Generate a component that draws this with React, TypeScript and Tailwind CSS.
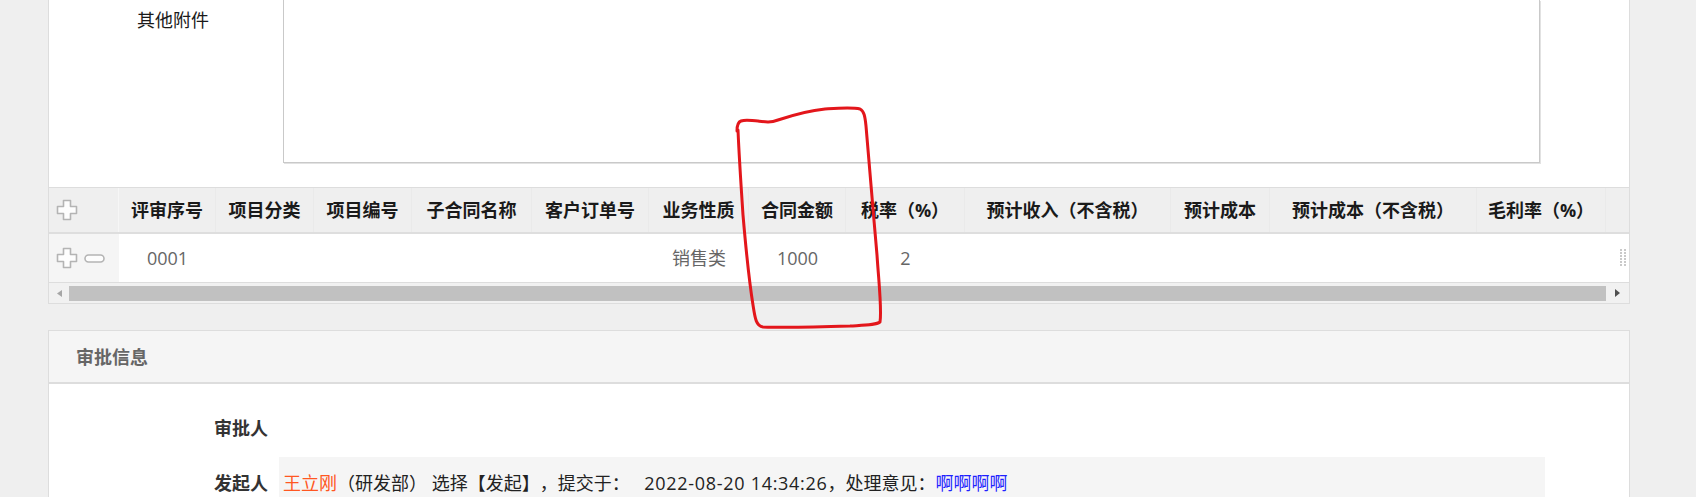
import React from "react";

const FONT = '"Open Sans", "Noto Sans CJK SC", "Microsoft YaHei", sans-serif';

function PlusIcon() {
  return (
    <svg width="22" height="22" viewBox="0 0 22 22">
      <path
        d="M7.5 1.5 H14.5 V7.5 H20.5 V14.5 H14.5 V20.5 H7.5 V14.5 H1.5 V7.5 H7.5 Z"
        fill="#fdfdfd"
        stroke="#b4b4b4"
        strokeWidth="1.6"
        strokeLinejoin="round"
      />
    </svg>
  );
}

function MinusIcon() {
  return (
    <svg width="21" height="9" viewBox="0 0 21 9">
      <rect x="1" y="1" width="19" height="7" rx="3.5" fill="#fdfdfd" stroke="#b4b4b4" strokeWidth="1.6" />
    </svg>
  );
}

function Grip() {
  const dots = [];
  for (let r = 0; r < 6; r++) {
    for (let c = 0; c < 2; c++) {
      dots.push(<rect key={`${r}-${c}`} x={c * 4} y={r * 3} width="2" height="2" fill="#c9c9c9" />);
    }
  }
  return (
    <svg width="7" height="18" viewBox="0 0 7 18">
      {dots}
    </svg>
  );
}

const headers = [
  "评审序号",
  "项目分类",
  "项目编号",
  "子合同名称",
  "客户订单号",
  "业务性质",
  "合同金额",
  "税率（%）",
  "预计收入（不含税）",
  "预计成本",
  "预计成本（不含税）",
  "毛利率（%）",
];

const rowVals = ["0001", "", "", "", "", "销售类", "1000", "2", "", "", "", ""];

const gridCols =
  "grid grid-cols-[70px_97px_98px_98px_120px_117px_100px_97px_119px_206px_99px_207px_129px_1fr]";

export default function App() {
  return (
    <div
      className="relative w-[1696px] h-[497px] overflow-hidden bg-[#efefef] text-[18px] leading-[26px] [text-spacing-trim:space-all]"
      style={{ fontFamily: FONT }}
    >
      {/* Top card */}
      <div className="ml-[48px] w-[1582px] bg-white border border-t-0 border-[#dddddd]">
        <div className="flex">
          <div className="w-[234px] pl-[88px] pt-[7px] text-[#1a1a1a]">其他附件</div>
          <div className="w-[1257px] h-[163px] border border-t-0 border-[#c9c9c9] shadow-[1px_1px_0_#e2e2e2]" />
        </div>

        {/* Table */}
        <div className="mt-[24px] border-t border-[#dddddd]">
          <div className={`${gridCols} h-[46px] bg-[#efefef] border-b-2 border-[#dedede]`}>
            <div className="flex items-center pl-[7px] border-r border-[#f6f6f6]">
              <PlusIcon />
            </div>
            {headers.map((h, i) => (
              <div
                key={i}
                className="flex items-center justify-center font-bold text-[#1a1a1a] whitespace-nowrap border-r border-[#eaeaea]"
              >
                {h}
              </div>
            ))}
            <div />
          </div>
          <div className={`${gridCols} h-[49px] bg-white border-b border-[#dddddd]`}>
            <div className="flex items-center gap-[6px] pl-[7px] bg-[#f5f5f5]">
              <PlusIcon />
              <MinusIcon />
            </div>
            {rowVals.map((v, i) => (
              <div key={i} className="flex items-center justify-center text-[#666666] whitespace-nowrap">
                {v}
              </div>
            ))}
            <div className="flex items-center justify-end pr-[2px]">
              <Grip />
            </div>
          </div>
          {/* Scrollbar */}
          <div className="flex h-[20px] items-center bg-[#f1f1f1]">
            <div className="w-[20px] flex items-center justify-center">
              <svg width="5" height="7" viewBox="0 0 5 7">
                <path d="M5 0 L0 3.5 L5 7 Z" fill="#a6a6a6" />
              </svg>
            </div>
            <div className="w-[1537px] h-[15px] bg-[#c1c1c1]" />
            <div className="flex-1 flex items-center justify-center">
              <svg width="5" height="8" viewBox="0 0 5 8">
                <path d="M0 0 L5 4 L0 8 Z" fill="#505050" />
              </svg>
            </div>
          </div>
        </div>
      </div>

      {/* Approval card */}
      <div className="ml-[48px] mt-[26px] w-[1582px] bg-white border border-[#dddddd]">
        <div className="h-[53px] flex items-center pl-[27px] bg-[#f5f5f5] border-b-2 border-[#dddddd]">
          <span className="font-bold text-[#666666]">审批信息</span>
        </div>
        <div className="pt-[17px]">
          <div className="flex">
            <div className="w-[219px] pt-[14px] pb-[10px] text-right font-bold text-[#333333]">审批人</div>
            <div className="w-[1266px] ml-[11px] pt-[14px] pb-[10px]" />
          </div>
          <div className="flex mt-[6px]">
            <div className="w-[219px] pt-[13px] pb-[11px] text-right font-bold text-[#333333]">发起人</div>
            <div className="w-[1266px] ml-[11px] pt-[13px] pb-[11px] pl-[4px] bg-[#f5f5f5] text-[#222222] whitespace-nowrap">
              <span className="text-[#ff5722]">王立刚</span>
              <span>（研发部） 选择【发起】，提交于： </span>
              <span className="ml-[10px] tracking-[0.7px]">2022-08-20 14:34:26</span>
              <span>，处理意见：</span>
              <span className="text-[#2020ff]">啊啊啊啊</span>
            </div>
          </div>
        </div>
      </div>

      {/* Hand-drawn red annotation */}
      <svg className="absolute inset-0 pointer-events-none" width="1696" height="497" viewBox="0 0 1696 497">
        <path
          d="M737 131 C737 126 738 122 741 121 C747 119 752 121 758 121 C765 122 770 123 778 120 C790 116 805 111 825 109 C840 108 852 107 860 109 C864 111 865 116 866 126 C869 160 873 210 877 255 C879 285 882 310 880 322 C876 325 868 325 850 326 C820 327 790 328 763 327 C756 326 755 318 753 305 C749 280 746 250 743 215 C741 185 739 155 738 130"
          fill="none"
          stroke="#e3161b"
          strokeWidth="3"
          strokeLinecap="round"
          strokeLinejoin="round"
        />
      </svg>
    </div>
  );
}
